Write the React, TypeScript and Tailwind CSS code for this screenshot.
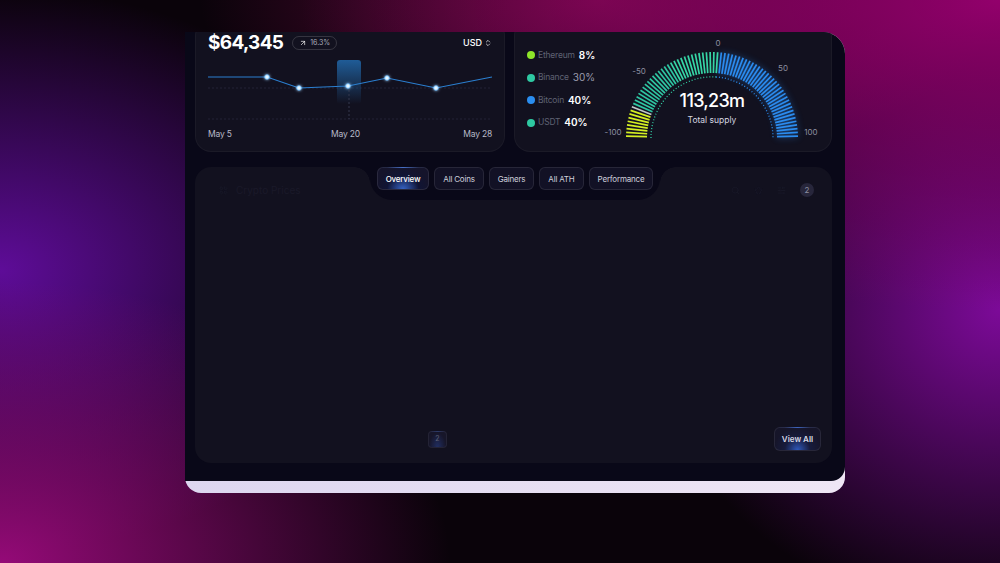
import { ArrowUpRight, ChevronsUpDown, LayoutGrid, Search, SlidersHorizontal, Star } from "lucide-react";

const points: [number, number][] = [
  [0, 22],
  [59, 22],
  [91, 33],
  [140, 31],
  [179, 23],
  [228, 33],
  [284, 22],
];

const legend = [
  { name: "Ethereum", value: "8%", dot: "bg-[#8ee52a]", bold: true },
  { name: "Binance", value: "30%", dot: "bg-[#2ec9a2]", bold: false },
  { name: "Bitcoin", value: "40%", dot: "bg-[#2a8ef0]", bold: true },
  { name: "USDT", value: "40%", dot: "bg-[#2ec9a2]", bold: true },
];

const tabs = ["Overview", "All Coins", "Gainers", "All ATH", "Performance"];

function PriceCard() {
  const line = points.map((p) => p.join(",")).join(" ");
  return (
    <div className="w-[310px] h-[132px] bg-[#12111f] rounded-2xl border border-white/[0.04] px-[12px] pt-[10px] flex flex-col">
      {/* Header */}
      <div className="flex items-center h-[24px]">
        <span className="text-[19px] font-bold text-white tracking-[-0.7px]">$64,345</span>
        <span className="ml-[9px] flex items-center gap-[3px] h-[14px] px-[6px] rounded-full border border-white/15 text-[7px] text-[#a9abbb]">
          <ArrowUpRight size={8} className="text-white" />
          16.3%
        </span>
        <span className="ml-auto flex items-center gap-[2px] text-[9px] font-medium text-white">
          USD
          <ChevronsUpDown size={8} />
        </span>
      </div>

      {/* Chart */}
      <svg width="284" height="70" viewBox="0 0 284 70" className="overflow-visible">
        <defs>
          <linearGradient id="hl" x1="0" y1="0" x2="0" y2="1">
            <stop offset="0" stopColor="#1f5c97" />
            <stop offset="1" stopColor="#1f5c97" stopOpacity="0" />
          </linearGradient>
          <filter id="dotglow" x="-2" y="-2" width="5" height="5">
            <feGaussianBlur stdDeviation="1.6" result="b" />
            <feMerge>
              <feMergeNode in="b" />
              <feMergeNode in="SourceGraphic" />
            </feMerge>
          </filter>
        </defs>
        <line x1="0" y1="33" x2="284" y2="33" stroke="#232336" strokeDasharray="2 2" />
        <line x1="0" y1="64" x2="284" y2="64" stroke="#232336" strokeDasharray="2 2" />
        <rect x="129" y="5" width="24" height="44" rx="3" fill="url(#hl)" />
        <line x1="141" y1="31" x2="141" y2="64" stroke="#34384f" strokeDasharray="2 2" />
        <polyline points={line} fill="none" stroke="#2b7fd0" strokeWidth="1.2" />
        {points.slice(1, 6).map(([x, y]) => (
          <circle key={x} cx={x} cy={y} r="2.3" fill="#e8f6ff" stroke="#5ab8ff" strokeWidth="0.8" filter="url(#dotglow)" />
        ))}
      </svg>

      <div className="flex justify-between text-[8.5px] text-[#b9bbc9] mt-[3px] tracking-[-0.2px]">
        <span>May 5</span>
        <span className="-ml-[4px]">May 20</span>
        <span>May 28</span>
      </div>
    </div>
  );
}

function Gauge() {
  const cx = 115;
  const cy = 104;
  const n = 72;
  const bars = Array.from({ length: n }, (_, i) => {
    const deg = 180 - (i + 0.5) * (180 / n);
    const rad = (deg * Math.PI) / 180;
    let color = "#2b8cf0";
    if (deg > 160) color = "#d4ef22";
    else if (deg > 157) color = "#c2c8c8";
    else if (deg > 120) color = "#2ec6a2";
    else if (deg > 86) color = "#36d6a6";
    return {
      x1: cx + 65 * Math.cos(rad),
      y1: cy - 65 * Math.sin(rad),
      x2: cx + 86 * Math.cos(rad),
      y2: cy - 86 * Math.sin(rad),
      color,
      blue: deg <= 86,
    };
  });
  const blue = bars.filter((b) => b.blue);

  return (
    <svg width="230" height="112" viewBox="0 0 230 112" className="overflow-visible">
      <defs>
        <filter id="glow" x="-0.3" y="-0.3" width="1.6" height="1.6">
          <feGaussianBlur stdDeviation="3.5" />
        </filter>
      </defs>

      {/* glow under blue bars */}
      <g filter="url(#glow)" opacity="0.5">
        {blue.map((b, i) => (
          <line key={i} x1={b.x1} y1={b.y1} x2={b.x2} y2={b.y2} stroke="#2b8cf0" strokeWidth="2" />
        ))}
      </g>

      {/* dotted inner arc */}
      <path d={`M ${cx - 61} ${cy} A 61 61 0 0 1 ${cx + 4} ${cy - 61}`} fill="none" stroke="#33cfa5" strokeWidth="1.3" strokeDasharray="1 2" />
      <path d={`M ${cx + 4} ${cy - 61} A 61 61 0 0 1 ${cx + 61} ${cy}`} fill="none" stroke="#2b8cf0" strokeWidth="1.3" strokeDasharray="1 2" />

      {bars.map((b, i) => (
        <line key={i} x1={b.x1} y1={b.y1} x2={b.x2} y2={b.y2} stroke={b.color} strokeWidth="1.7" />
      ))}

      <g fill="#8d8fa0" fontSize="8" fontFamily="Inter, sans-serif">
        <text x="121" y="12" textAnchor="middle">0</text>
        <text x="42" y="40" textAnchor="middle">-50</text>
        <text x="186" y="37" textAnchor="middle">50</text>
        <text x="16" y="101" textAnchor="middle">-100</text>
        <text x="214" y="101" textAnchor="middle">100</text>
      </g>
      <text x={cx} y="73" textAnchor="middle" fill="#ffffff" fontSize="18" fontWeight="500" fontFamily="Inter, sans-serif" letterSpacing="-0.7">
        113,23m
      </text>
      <text x={cx} y="89" textAnchor="middle" fill="#d6d7e0" fontSize="8.5" fontFamily="Inter, sans-serif">
        Total supply
      </text>
    </svg>
  );
}

function SupplyCard() {
  return (
    <div className="w-[318px] h-[132px] bg-[#12111f] rounded-2xl border border-white/[0.04] flex items-start">
      {/* Legend */}
      <div className="pl-[12px] pt-[28px] flex flex-col gap-[10.5px]">
        {legend.map((l) => (
          <div key={l.name} className="flex items-center h-[12px]">
            <span className={`w-[8px] h-[8px] rounded-full ${l.dot}`} />
            <span className="ml-[3px] text-[8.5px] text-[#5f6273] tracking-[-0.2px]">{l.name}</span>
            <span className={`ml-[4px] text-[10px] ${l.bold ? "font-semibold text-white" : "text-[#9a9cad]"}`}>{l.value}</span>
          </div>
        ))}
      </div>
      <div className="ml-auto mr-[4px] mt-[13px]">
        <Gauge />
      </div>
    </div>
  );
}

function MarketCard() {
  return (
    <div className="relative w-[637px] h-[296px] bg-[#12111f] rounded-2xl flex flex-col">
      {/* Notch with tabs */}
      <div className="absolute top-0 left-[175px] w-[290px] h-[33px] bg-[#090818] rounded-b-[22px]">
        <div className="absolute top-0 -left-[16px] w-[16px] h-[16px] bg-[radial-gradient(circle_at_0_100%,transparent_15.5px,#090818_16px)]" />
        <div className="absolute top-0 -right-[16px] w-[16px] h-[16px] bg-[radial-gradient(circle_at_100%_100%,transparent_15.5px,#090818_16px)]" />
        <div className="flex justify-center gap-[5px]">
          {tabs.map((t, i) => (
            <button
              key={t}
              className={`h-[23px] px-[8px] whitespace-nowrap rounded-[6px] border border-white/[0.09] text-[8px] tracking-[-0.2px] text-[#cfd0dc] ${
                i === 0
                  ? "bg-[radial-gradient(ellipse_at_50%_100%,rgba(70,130,255,0.75),rgba(40,60,140,0.25)_45%,#15142b_75%)] font-medium text-white"
                  : "bg-[#121125]"
              }`}
            >
              {t}
            </button>
          ))}
        </div>
      </div>

      {/* Faint header */}
      <div className="flex items-center h-[46px] pl-[24px] pr-[18px]">
        <LayoutGrid size={9} className="text-[#1a1929]" />
        <span className="ml-[8px] text-[10px] text-[#1a1929]">Crypto Prices</span>
        <div className="ml-auto flex items-center gap-[14px] text-[#1a1929]">
          <Search size={9} />
          <Star size={9} />
          <SlidersHorizontal size={9} />
          <span className="w-[14px] h-[14px] rounded-full bg-[#27263b] text-[8px] text-[#8c8ea2] flex items-center justify-center">2</span>
        </div>
      </div>

      <div className="flex-1" />

      {/* Footer */}
      <div className="flex items-center h-[24px] mb-[12px] pr-[11px]">
        <span className="ml-[233px] w-[19px] h-[17px] rounded-[4px] border border-white/[0.06] bg-[radial-gradient(ellipse_at_50%_100%,rgba(60,100,220,0.35),#171629_70%)] text-[7px] text-[#5d6075] flex items-center justify-center">
          2
        </span>
        <button className="ml-auto w-[47px] h-[24px] rounded-[6px] border border-white/[0.08] bg-[radial-gradient(ellipse_at_50%_100%,rgba(60,120,255,0.7),rgba(40,60,150,0.25)_40%,#161529_75%)] text-[8px] font-semibold text-[#d9dae6] whitespace-nowrap">
          View All
        </button>
      </div>
    </div>
  );
}

export default function App() {
  return (
    <div
      className="w-[1000px] h-[563px] overflow-hidden pl-[185px] pt-[32px] bg-[#0a030a] bg-[image:radial-gradient(ellipse_70%_55%_at_100%_0%,#93006c_0%,transparent_100%),radial-gradient(ellipse_45%_50%_at_0%_100%,#950a78_0%,transparent_100%),radial-gradient(ellipse_40%_50%_at_0%_48%,#5e0c98_0%,transparent_100%),radial-gradient(ellipse_35%_55%_at_100%_55%,#7c0a98_0%,transparent_100%),radial-gradient(ellipse_40%_30%_at_60%_0%,#6a0840_0%,transparent_100%)]"
      style={{ fontFamily: "Inter, 'Noto Sans', sans-serif" }}
    >
      {/* Device */}
      <div className="w-[660px] rounded-tr-[22px] rounded-b-[16px] bg-[linear-gradient(90deg,#ddd6f0,#efe6f5)] pb-[12px]">
        <div className="h-[449px] rounded-tr-[22px] rounded-br-[14px] bg-[#090818] overflow-hidden pl-[10px] pr-[13px]">
          <div className="-mt-[12px] flex gap-[9px]">
            <PriceCard />
            <SupplyCard />
          </div>
          <div className="mt-[15px]">
            <MarketCard />
          </div>
        </div>
      </div>
    </div>
  );
}
